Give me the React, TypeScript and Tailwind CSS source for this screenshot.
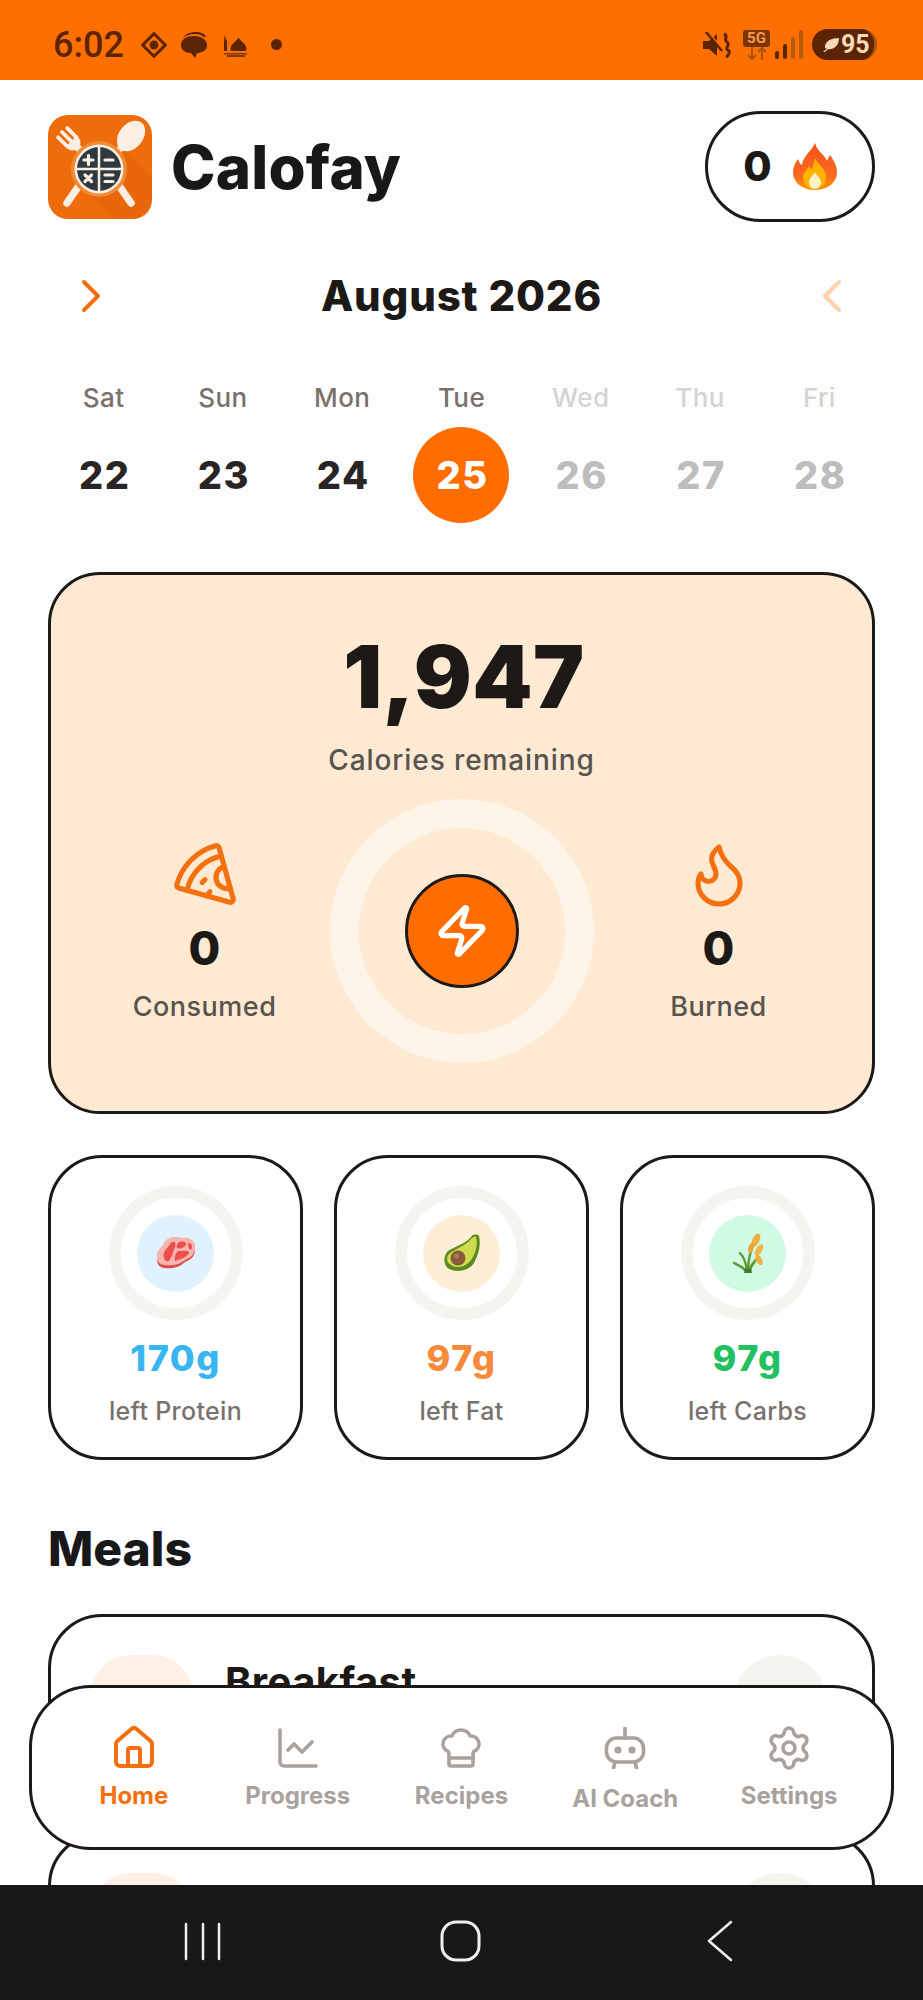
import { ChevronRight, ChevronLeft, Pizza, Flame, Zap, House, ChartLine, ChefHat, Settings } from "lucide-react";

const font = "[font-family:Inter,'Liberation_Sans',sans-serif]";

function Logo() {
  return (
    <svg width="104" height="104" viewBox="0 0 104 104" className="shrink-0">
      <rect width="104" height="104" rx="20" fill="#ef6c0c" />
      <path d="M74 32 L104 62 V84 Q104 104 84 104 L66 104 L40 78 Z" fill="#d95f08" opacity="0.35" />
      <g stroke="#fbeee3" strokeLinecap="round" fill="none">
        <path d="M30 72 L19 88" strokeWidth="7.5" />
        <path d="M72 72 L83 88" strokeWidth="7.5" />
        <path d="M67 40 L77 28" strokeWidth="6.5" />
      </g>
      <g transform="translate(26 29) rotate(-45)" stroke="#fbeee3" strokeLinecap="round" fill="none">
        <path d="M-6.5 -3 V-16 M0 -3 V-17 M6.5 -3 V-16" strokeWidth="3.8" />
        <path d="M-7 -3 H7 Q7 4 0 5 Q-7 4 -7 -3 Z" fill="#fbeee3" strokeWidth="2" />
        <path d="M0 4 V18" strokeWidth="7" />
      </g>
      <ellipse cx="83" cy="21" rx="12" ry="17" transform="rotate(38 83 21)" fill="#fbeee3" />
      <circle cx="51" cy="54" r="28" fill="#f08a35" />
      <circle cx="51" cy="54" r="24.5" fill="#fbeee3" />
      <circle cx="51" cy="54" r="22" fill="#2f3a40" />
      <path d="M51 31 V77 M28 54 H74" stroke="#fbeee3" strokeWidth="2.5" />
      <g stroke="#fbeee3" strokeWidth="3.2" strokeLinecap="round">
        <path d="M36 45 H45 M40.5 40.5 V49.5 M57 45 H65" />
        <path d="M37 60 L43.5 66.5 M43.5 60 L37 66.5 M57 60 H65 M57 66.5 H65" />
      </g>
    </svg>
  );
}

function FireEmoji() {
  return (
    <svg width="44" height="47" viewBox="0 0 44 47" className="shrink-0">
      <defs>
        <linearGradient id="fire" x1="0" y1="0" x2="0" y2="1">
          <stop offset="0" stopColor="#f4511e" />
          <stop offset="0.7" stopColor="#fb6a1e" />
          <stop offset="1" stopColor="#ff9800" />
        </linearGradient>
      </defs>
      <path d="M22 0 C24 8 31 11 34 18 C35 15 36 14 37 12 C42 19 44 24 44 29 C44 40 34 47 22 47 C10 47 0 40 0 29 C0 24 2 20 5 16 C6 19 7 21 9 22 C10 13 18 9 22 0 Z" fill="url(#fire)" />
      <path d="M22 15 C24 21 33 25 33 34 C33 42 27 46 22 46 C15 46 10 41 10 34 C10 29 14 27 16 23 C17 25 18 26 19 26 C20 23 21 19 22 15 Z" fill="#ffb300" />
      <path d="M22 29 C24 33 28 35 28 39 C28 43 25 46 22 46 C18 46 16 43 16 39 C16 35 20 33 22 29 Z" fill="#fff3c4" />
    </svg>
  );
}

function Steak() {
  return (
    <svg width="42" height="32" viewBox="0 0 42 32">
      <path d="M3 20 C1 14 7 12 9 7 C12 1 20 0 27 2 C34 0 41 5 40 13 C40 20 35 23 30 25 C24 31 16 32 9 31 C3 30 1 25 3 20 Z" fill="#dc4a4a" />
      <path d="M3 18 C1 13 7 11 9 6 C12 0 20 -1 27 1 C34 -1 41 4 40 11 C40 18 35 21 30 23 C24 28 16 29 9 28 C3 27 1 23 3 18 Z" fill="#f7b5ad" />
      <path d="M9 21 C7 15 12 12 15 7 C18 3 22 5 20 10 C18 15 17 20 14 24 C12 25 10 24 9 21 Z" fill="#ec4f4c" />
      <path d="M23 6 C27 3 32 5 31 8 C29 11 25 12 22 11 C21 9 22 7 23 6 Z M33 6 C37 6 38 10 36 13 C34 13 33 9 33 6 Z M23 14 C27 14 32 13 34 15 C33 20 26 22 20 24 C19 20 21 16 23 14 Z" fill="#ec4f4c" />
    </svg>
  );
}

function Avocado() {
  return (
    <svg width="38" height="38" viewBox="0 0 38 38">
      <path d="M36 2 C38 10 36 20 31 29 C26 37 14 39 6 35 C0 31 0 22 5 17 C13 12 22 10 28 3 C30 0 34 0 36 2 Z" fill="#5d8a1f" />
      <path d="M33 3 C35 10 33 19 28 26 C23 33 14 35 8 31 C3 28 3 22 7 19 C14 14 22 12 28 5 C30 3 32 2 33 3 Z" fill="#cfdc4f" />
      <circle cx="15" cy="24" r="7.5" fill="#8a5a3c" />
      <circle cx="13.5" cy="22" r="2.5" fill="#a97a5a" />
    </svg>
  );
}

function Rice() {
  return (
    <svg width="32" height="40" viewBox="0 0 32 40" fill="none">
      <path d="M15 38 C14 30 12 24 8 20 M16 38 C16 28 18 18 23 8 M17 38 C19 32 22 28 27 24 M14 38 C11 34 6 32 2 30 M18 38 C18 34 20 32 22 30" stroke="#5d9a34" strokeWidth="2.4" strokeLinecap="round" />
      <path d="M13 36 L12 40 H20 L19 36 Z" fill="#3f7a2a" />
      <ellipse cx="24" cy="7" rx="3.5" ry="7" transform="rotate(25 24 7)" fill="#eeb040" />
      <ellipse cx="27" cy="17" rx="3.2" ry="6.5" transform="rotate(30 27 17)" fill="#f2b843" />
      <ellipse cx="19" cy="15" rx="2.6" ry="5.5" transform="rotate(15 19 15)" fill="#e9a838" />
      <ellipse cx="27" cy="27" rx="3" ry="5.5" transform="rotate(-30 27 27)" fill="#eeb040" />
    </svg>
  );
}

function BotIcon() {
  return (
    <svg width="42" height="42" viewBox="0 0 42 42" fill="none" stroke="#a8a29e" strokeWidth="3.6" strokeLinecap="round" strokeLinejoin="round">
      <path d="M21 1 V11" />
      <rect x="2.5" y="11" width="37" height="24" rx="10" />
      <path d="M11 35 L9.5 41 M31 35 L32.5 41" />
      <circle cx="14" cy="23" r="3.6" fill="#a8a29e" stroke="none" />
      <circle cx="28" cy="23" r="3.6" fill="#a8a29e" stroke="none" />
    </svg>
  );
}

function StatusLeft() {
  return (
    <div className="flex items-center">
      <span className="text-[36px] leading-none font-medium text-[#5a2405] [font-family:Roboto,sans-serif] w-[88px]">6:02</span>
      <svg width="26" height="26" viewBox="0 0 26 26" fill="none">
        <rect x="5" y="5" width="16" height="16" transform="rotate(45 13 13)" stroke="#5a2405" strokeWidth="3" />
        <circle cx="13" cy="13" r="4.5" fill="#5a2405" />
      </svg>
      <svg width="28" height="26" viewBox="0 0 28 26" className="ml-[13px]">
        <path d="M3 6 C5 2 10 0 16 0 C21 0 25 2 26 5 L24 5 C22 3 19 2 15 2 C10 2 6 3 3 6 Z" fill="#5a2405" />
        <path d="M1 13 C1 7 7 4 14 4 C22 4 27 8 27 13 C27 19 21 21 17 21 L15 26 L11 21 C5 21 1 18 1 13 Z" fill="#5a2405" />
      </svg>
      <svg width="24" height="24" viewBox="0 0 24 24" className="ml-[15px]" fill="#5a2405">
        <path d="M1 18 V8 L1.5 6 L1 2 L3 6 L4 8 V18 Z" />
        <path d="M8 18 C6 13 11 10 15.5 5 C20 10 25 13 23 18 Z" />
        <path d="M1 20 H24 V21.5 H1 Z M4 22 H22 V24 H4 Z" opacity="0.75" />
      </svg>
      <span className="ml-[24px] w-[11px] h-[11px] rounded-full bg-[#5a2405]" />
    </div>
  );
}

function StatusRight() {
  return (
    <div className="flex items-center">
      <svg width="30" height="26" viewBox="0 0 30 26" fill="#5a2405">
        <path d="M0 9 H6 L14 2 V24 L6 17 H0 Z" />
        <path d="M5 0 L21 19" stroke="#ff6f00" strokeWidth="2" />
        <path d="M3 0 L19 19" stroke="#5a2405" strokeWidth="2.5" />
        <path d="M21 2 C26 4 20 8 24 10 C28 13 21 16 25 18 C28 20 25 24 23 25" fill="none" stroke="#5a2405" strokeWidth="3" />
      </svg>
      <div className="ml-[10px] w-[27px] h-[30px] flex flex-col items-center">
        <span className="w-[27px] h-[17px] rounded-[3px] bg-[#7a3405] text-[15px] leading-[17px] font-bold text-center text-[#f49a4f] [font-family:Roboto,sans-serif]">5G</span>
        <svg width="22" height="13" viewBox="0 0 22 13" fill="none" stroke="#a8530f" strokeWidth="2">
          <path d="M6 0 V11 M2 8 L6 12 L10 8 M16 13 V2 M12 5 L16 1 L20 5" />
        </svg>
      </div>
      <svg width="28" height="29" viewBox="0 0 28 29" className="ml-[5px]">
        <rect x="0" y="21" width="4" height="8" rx="2" fill="#5a2405" />
        <rect x="8" y="14" width="4" height="15" rx="2" fill="#5a2405" />
        <rect x="16" y="7" width="4" height="22" rx="2" fill="#b65a0e" />
        <rect x="24" y="0" width="4" height="29" rx="2" fill="#b65a0e" />
      </svg>
      <div className="ml-[9px] w-[65px] h-[31px] rounded-full bg-[#5a2405] flex items-center pl-[9px] gap-[1px] border-r-[3px] border-[#a8530f]">
        <svg width="19" height="16" viewBox="0 0 20 17" fill="#fcd9b6">
          <path d="M2 16 C5 13 8 11 11 9 C8 12 6 14 4 16 Z M4 10 C5 4 11 1 19 1 C19 8 15 13 8 13 C7 13 6 13 5 12 C4 11 4 11 4 10 Z" />
        </svg>
        <span className="text-[25px] leading-none font-bold text-[#fcd9b6] [font-family:Roboto,sans-serif]">95</span>
      </div>
    </div>
  );
}

const days = [
  { n: "Sat", d: "22" },
  { n: "Sun", d: "23" },
  { n: "Mon", d: "24" },
  { n: "Tue", d: "25", active: true },
  { n: "Wed", d: "26", future: true },
  { n: "Thu", d: "27", future: true },
  { n: "Fri", d: "28", future: true },
];

function Week() {
  return (
    <div className="mt-[59px] mx-[-4px] grid grid-cols-7">
      {days.map((x) => (
        <div key={x.d} className="flex flex-col items-center">
          <span className={`text-[26px] leading-[30px] font-medium tracking-[0.4px] ${x.future ? "text-[#d6d3d1]" : "text-[#78716c]"}`}>{x.n}</span>
          <span
            className={`mt-[14px] w-[96px] h-[96px] rounded-full flex items-center justify-center pl-[2px] text-[38px] font-extrabold tracking-[1.5px] ${
              x.active ? "bg-[#ff6d00] text-white" : x.future ? "text-[#bdbdbd]" : "text-[#292524]"
            }`}
          >
            {x.d}
          </span>
        </div>
      ))}
    </div>
  );
}

function SideStat({ icon, label }: { icon: React.ReactNode; label: string }) {
  return (
    <div className="w-[180px] flex flex-col items-center">
      <div className="h-[72px] flex items-center justify-center">{icon}</div>
      <span className="mt-[13px] text-[46px] leading-[50px] font-extrabold text-[#1c1917]">0</span>
      <span className="mt-[16px] text-[27px] leading-[36px] font-medium tracking-[0.5px] text-[#57534e]">{label}</span>
    </div>
  );
}

function SummaryCard() {
  return (
    <div className="mt-[49px] h-[542px] rounded-[52px] border-[3px] border-[#1c1917] bg-[#fee9d2] flex flex-col items-center pt-[54px]">
      <span className="ml-[5px] text-[86px] leading-[96px] font-black text-[#1c1917] tracking-[0.5px]">1,947</span>
      <span className="mt-[17px] text-[28px] leading-[36px] font-medium tracking-[0.9px] text-[#57534e]">Calories remaining</span>
      <div className="mt-[21px] flex items-center gap-[35px]">
        <SideStat icon={<Pizza size={68} strokeWidth={1.8} color="#f4700f" />} label="Consumed" />
        <div className="w-[264px] h-[264px] rounded-full border-[29px] border-[#fff4e8] flex items-center justify-center">
          <div className="w-[114px] h-[114px] rounded-full bg-[#ff6d00] border-[3px] border-[#1c1917] flex items-center justify-center">
            <Zap size={56} strokeWidth={2.2} color="#ffffff" />
          </div>
        </div>
        <SideStat icon={<Flame size={72} strokeWidth={1.7} color="#f4700f" />} label="Burned" />
      </div>
    </div>
  );
}

function Macro({ icon, bg, value, color, label }: { icon: React.ReactNode; bg: string; value: string; color: string; label: string }) {
  return (
    <div className="h-[305px] rounded-[54px] border-[3px] border-[#1c1917] bg-white flex flex-col items-center pt-[28px]">
      <div className="w-[134px] h-[134px] rounded-full border-[12px] border-[#f5f5f0] flex items-center justify-center">
        <div className={`w-[77px] h-[77px] rounded-full flex items-center justify-center ${bg}`}>{icon}</div>
      </div>
      <span className={`mt-[18px] text-[36px] leading-[40px] font-extrabold tracking-[1.5px] ${color}`}>{value}</span>
      <span className="mt-[17px] text-[25px] leading-[32px] font-medium tracking-[0.3px] text-[#78716c]">{label}</span>
    </div>
  );
}

function MealCard({ title }: { title: string }) {
  return (
    <div className="h-[198px] rounded-[54px] border-[3px] border-[#1c1917] bg-white flex items-start pt-[38px] pl-[40px] pr-[45px]">
      <div className="w-[102px] h-[116px] rounded-[40px] bg-[#fff0e6]" />
      <span className="ml-[32px] mt-[4px] text-[40px] leading-[46px] font-bold tracking-[0.4px] text-[#1c1917] flex-1">{title}</span>
      <div className="w-[94px] h-[94px] rounded-full bg-[#f5f5f0]" />
    </div>
  );
}

function NavItem({ icon, label, active, low }: { icon: React.ReactNode; label: string; active?: boolean; low?: boolean }) {
  return (
    <div className="flex flex-col items-center">
      <div className="h-[48px] flex items-center justify-center">{icon}</div>
      <span className={`${low ? "mt-[12px]" : "mt-[9px]"} text-[24px] leading-[30px] font-bold ${active ? "text-[#f4700f]" : "text-[#a8a29e]"}`}>{label}</span>
    </div>
  );
}

export default function App() {
  return (
    <div className={`relative w-[923px] h-[2000px] overflow-hidden bg-[#fdfdfd] ${font}`}>
      <div className="h-[80px] bg-[#ff6f00] flex items-center justify-between pt-[9px] pl-[53px] pr-[46px]">
        <StatusLeft />
        <StatusRight />
      </div>

      <div className="px-[48px]">
        <div className="pt-[31px] flex items-center justify-between">
          <div className="flex items-center gap-[19px]">
            <Logo />
            <span className="text-[60px] leading-none font-extrabold text-[#18181b] tracking-[0.2px]">Calofay</span>
          </div>
          <div className="w-[170px] h-[111px] rounded-full border-[3px] border-[#1c1917] bg-white flex items-center justify-center gap-[21px]">
            <span className="text-[41px] leading-none font-extrabold text-[#1c1917]">0</span>
            <FireEmoji />
          </div>
        </div>

        <div className="mt-[46px] px-[15px] flex items-center justify-between">
          <ChevronRight size={56} strokeWidth={1.7} color="#f4700f" />
          <span className="text-[42px] leading-[56px] font-extrabold text-[#1c1917] tracking-[0.8px]">August 2026</span>
          <ChevronLeft size={56} strokeWidth={1.7} color="#fdd2ae" />
        </div>

        <Week />
        <SummaryCard />

        <div className="mt-[41px] grid grid-cols-3 gap-[31px]">
          <Macro icon={<Steak />} bg="bg-[#e0f2fe]" value="170g" color="text-[#38b6f1]" label="left Protein" />
          <Macro icon={<Avocado />} bg="bg-[#ffedd5]" value="97g" color="text-[#f7893b]" label="left Fat" />
          <Macro icon={<Rice />} bg="bg-[#d1fae5]" value="97g" color="text-[#22c060]" label="left Carbs" />
        </div>

        <h2 className="mt-[61px] text-[48px] leading-[56px] font-extrabold text-[#18181b]">Meals</h2>

        <div className="mt-[37px] flex flex-col gap-[20px]">
          <MealCard title="Breakfast" />
          <MealCard title="Lunch" />
        </div>
      </div>

      <div className="absolute left-[29px] top-[1685px] w-[865px] h-[165px] rounded-[62px] border-[3px] border-[#1c1917] bg-[#fffefd] px-[20px] pt-[36px] grid grid-cols-5">
        <NavItem active label="Home" icon={<House size={48} strokeWidth={2} color="#f4700f" />} />
        <NavItem label="Progress" icon={<ChartLine size={48} strokeWidth={1.8} color="#a8a29e" />} />
        <NavItem label="Recipes" icon={<ChefHat size={48} strokeWidth={1.8} color="#a8a29e" />} />
        <NavItem low label="AI Coach" icon={<BotIcon />} />
        <NavItem label="Settings" icon={<Settings size={48} strokeWidth={1.8} color="#a8a29e" />} />
      </div>

      <div className="absolute left-0 right-0 bottom-0 h-[115px] bg-[#18181a] flex items-center">
        <svg width="923" height="115" viewBox="0 0 923 115" fill="none" stroke="#f0f0f0" strokeWidth="2.5" strokeLinecap="round" strokeLinejoin="round">
          <path d="M186 39 V74 M203 39 V74 M219 39 V74" />
          <rect x="442" y="37" width="37" height="38" rx="14" strokeWidth="3" />
          <path d="M731 37 L709 56 L731 75" />
        </svg>
      </div>
    </div>
  );
}
